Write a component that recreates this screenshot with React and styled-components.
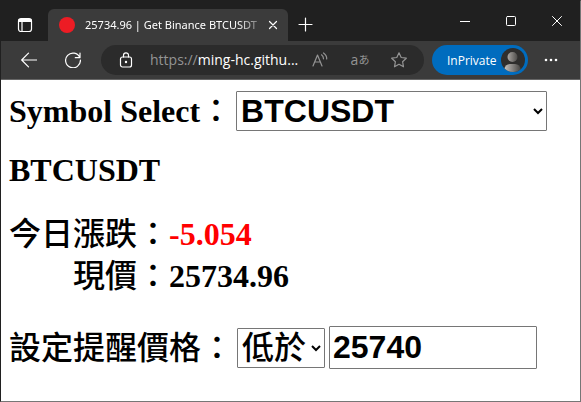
import React, { useState } from "react";
import styled, { createGlobalStyle } from "styled-components";

const GlobalStyle = createGlobalStyle`
  * { box-sizing: border-box; }
  body { margin: 0; background: #fff; }
  button { border: 0; padding: 0; background: none; color: inherit; font: inherit; }
  svg { display: block; flex: none; }
`;

const Window = styled.div`
  display: flex;
  flex-direction: column;
  min-height: 100vh;
  border: 1px solid #767676;
  border-left-color: #202020;
  border-top-color: #202020;
  font-family: "Open Sans", "Noto Sans", sans-serif;
`;

const TitleBar = styled.header`
  display: flex;
  height: 40px;
  background: #202020;
  color: #fff;
`;

const IconButton = styled.button`
  display: flex;
  align-items: center;
  justify-content: center;
  width: ${(p) => p.$width}px;
  height: ${(p) => p.$height || 40}px;
  flex: none;
  color: ${(p) => p.$color || "#fff"};
`;

const Tab = styled.div`
  display: flex;
  align-items: center;
  width: 240px;
  min-width: 0;
  margin-top: 8px;
  padding-left: 11px;
  border-radius: 6px 6px 0 0;
  background: #3b3b3b;
`;

const TabTitle = styled.span`
  flex: 1;
  margin-left: 10px;
  overflow: hidden;
  white-space: nowrap;
  font-family: "Noto Sans", sans-serif;
  font-size: 11px;
  line-height: 18px;
  mask-image: linear-gradient(to right, #000 88%, transparent 106%);
`;

const Controls = styled.div`
  display: flex;
  margin-left: auto;
`;

const Toolbar = styled.nav`
  display: flex;
  align-items: center;
  height: 39px;
  padding: 0 6px;
  background: #3b3b3b;
  border-bottom: 1px solid #666;
  color: #fff;
`;

const AddressBar = styled.div`
  display: flex;
  align-items: center;
  flex: 1;
  min-width: 0;
  height: 30px;
  margin-left: 6px;
  padding-right: 6px;
  border-radius: 15px;
  background: #2b2b2b;
`;

const Address = styled.span`
  flex: 1;
  overflow: hidden;
  white-space: nowrap;
  font-size: 14px;
  line-height: 20px;
  color: #fff;
`;

const Scheme = styled.span`
  color: #949494;
`;

const Glyphs = styled.span`
  font-family: "Open Sans", "Noto Sans CJK JP", sans-serif;
  font-size: ${(p) => p.$size}px;
  line-height: 18px;
`;

const Profile = styled.button`
  display: flex;
  align-items: center;
  justify-content: space-between;
  width: 96px;
  height: 30px;
  margin-left: 8px;
  flex: none;
  && { padding: 0 3px 0 15px; background: #006cbe; font-size: 12px; }
  border-radius: 15px;
`;

const Page = styled.main`
  padding: 10px 8px;
  font: bold 32px/42px "Liberation Serif", "Noto Sans CJK TC", serif;
  color: #000;
`;

const FieldRow = styled.div`
  display: flex;
  align-items: center;
  gap: 4px;
  margin-top: ${(p) => p.$top || 0}px;
`;

const Label = styled.label`
  white-space: nowrap;
`;

const Han = styled.span`
  font-family: "Noto Sans CJK TC", sans-serif;
  font-weight: 500;
  line-height: 32px;
`;

const Heading = styled.h1`
  margin: 17px 0 0;
  font: inherit;
`;

const Quotes = styled.dl`
  display: grid;
  grid-template-columns: max-content 1fr;
  margin: 22px 0 0;
`;

const Term = styled.dt`
  text-align: right;
`;

const Value = styled.dd`
  margin: 0;
  color: ${(p) => (p.$down ? "#f00" : "#000")};
`;

const Select = styled.select`
  width: ${(p) => p.$width}px;
  height: 40px;
  min-width: 0;
  padding: 0;
  border: 1px solid #767676;
  border-radius: 1px;
  background-color: #fff;
  color: #000;
  font: ${(p) => p.$weight || 700} 32px "Liberation Sans", "Noto Sans CJK TC", sans-serif;
`;

const PriceInput = styled.input`
  width: 208px;
  min-width: 0;
  height: 43px;
  padding: 1px 3px;
  border: 1px solid #767676;
  border-radius: 1px;
  color: #000;
  font: bold 32px "Liberation Sans", sans-serif;
`;

const Icon = ({ size = 16, children, ...rest }) => (
  <svg width={size} height={size} viewBox={`0 0 ${size} ${size}`} fill="none" stroke="currentColor" strokeWidth="1.2" strokeLinecap="round" strokeLinejoin="round" aria-hidden="true" {...rest}>
    {children}
  </svg>
);

const Avatar = () => (
  <svg width="24" height="24" viewBox="0 0 24 24" aria-hidden="true">
    <defs>
      <linearGradient id="skin"><stop offset="0" stopColor="#aaa6a2" /><stop offset="1" stopColor="#4d4b49" /></linearGradient>
      <linearGradient id="coat"><stop offset="0" stopColor="#c8c4c0" /><stop offset="1" stopColor="#454341" /></linearGradient>
      <clipPath id="disc"><circle cx="12" cy="12" r="12" /></clipPath>
    </defs>
    <g clipPath="url(#disc)">
      <rect width="24" height="24" fill="#2f2e2d" />
      <path d="M3 24v-2q1-6 6-6h5q5 0 6 6v2z" fill="url(#coat)" />
      <circle cx="11.5" cy="9" r="5" fill="url(#skin)" />
    </g>
  </svg>
);

export default function App() {
  const [symbol, setSymbol] = useState("BTCUSDT");
  const [side, setSide] = useState("低於");
  const [price, setPrice] = useState("25740");
  return (
    <Window>
      <GlobalStyle />
      <TitleBar>
        <IconButton $width={47} $height={47} aria-label="Tab actions">
          <Icon>
            <rect x="1.5" y="1.5" width="13" height="13" rx="2.5" />
            <path d="M2 2.5h12v2H2z" fill="currentColor" />
            <path d="M5 5v9" />
          </Icon>
        </IconButton>
        <Tab>
          <Icon stroke="none"><circle cx="8" cy="8" r="8" fill="#ed1c24" /></Icon>
          <TabTitle>25734.96 | Get Binance BTCUSDT</TabTitle>
          <IconButton $width={30} $height={32} aria-label="Close tab">
            <Icon size={10}><path d="M1.5 1.5l7 7M8.5 1.5l-7 7" /></Icon>
          </IconButton>
        </Tab>
        <IconButton $width={34} $height={46} aria-label="New tab">
          <Icon size={15}><path d="M7.5 1v13M1 7.5h13" /></Icon>
        </IconButton>
        <Controls>
          <IconButton $width={46} aria-label="Minimize"><Icon size={10}><path d="M0 5.5h10" strokeLinecap="butt" strokeWidth="1" /></Icon></IconButton>
          <IconButton $width={46} aria-label="Maximize"><Icon size={10}><rect x=".5" y=".5" width="9" height="9" rx="1" strokeWidth="1" /></Icon></IconButton>
          <IconButton $width={46} aria-label="Close"><Icon size={10}><path d="M.5.5l9 9M9.5.5l-9 9" strokeWidth="1" /></Icon></IconButton>
        </Controls>
      </TitleBar>
      <Toolbar>
        <IconButton $width={44} $height={36} aria-label="Back">
          <Icon><path d="M15.5 8H.7M7.5 1.2L.7 8l6.8 6.8" /></Icon>
        </IconButton>
        <IconButton $width={44} $height={36} aria-label="Refresh">
          <Icon><path d="M14.8 5.5A7.4 7.4 0 1 0 15.4 8M15 1v4.7h-4.7" /></Icon>
        </IconButton>
        <AddressBar>
          <IconButton $width={49} $height={30} aria-label="Site information">
            <Icon>
              <rect x="2.5" y="5" width="11" height="10" rx="2" />
              <path d="M5.5 5V3.3a2.5 2.5 0 0 1 5 0V5" />
              <circle cx="8" cy="10" r=".6" fill="currentColor" />
            </Icon>
          </IconButton>
          <Address><Scheme>https://</Scheme>ming-hc.githu...</Address>
          <IconButton $width={40} $height={30} $color="#949494" aria-label="Read aloud">
            <Icon><path d="M1 14L5.5 3 10 14M2.6 10h5.8M9.5 2.8q2 1.5 2 4M11.5 1q3.5 2.5 3.2 6" /></Icon>
          </IconButton>
          <IconButton $width={40} $height={30} $color="#949494" aria-label="Translate">
            <Glyphs $size={14}>a</Glyphs><Glyphs $size={11}>あ</Glyphs>
          </IconButton>
          <IconButton $width={38} $height={30} $color="#949494" aria-label="Add to favorites">
            <Icon><path d="M8 .8l2.2 4.7 5.1.7-3.7 3.5.9 5.1L8 12.3l-4.5 2.5.9-5.1L.7 6.2l5.1-.7z" /></Icon>
          </IconButton>
        </AddressBar>
        <Profile>InPrivate<Avatar /></Profile>
        <IconButton $width={46} $height={36} aria-label="Settings and more">
          <Icon stroke="none" fill="currentColor"><circle cx="3" cy="8" r="1.3" /><circle cx="8" cy="8" r="1.3" /><circle cx="13" cy="8" r="1.3" /></Icon>
        </IconButton>
      </Toolbar>
      <Page>
        <FieldRow>
          <Label htmlFor="symbol">Symbol Select<Han>：</Han></Label>
          <Select id="symbol" $width={311} value={symbol} onChange={(e) => setSymbol(e.target.value)}>
            <option>BTCUSDT</option>
          </Select>
        </FieldRow>
        <Heading>{symbol}</Heading>
        <Quotes>
          <Term><Han>今日漲跌：</Han></Term>
          <Value $down>-5.054</Value>
          <Term><Han>現價：</Han></Term>
          <Value>25734.96</Value>
        </Quotes>
        <FieldRow $top={29}>
          <Label htmlFor="side"><Han>設定提醒價格：</Han></Label>
          <Select id="side" $width={88} $weight={500} value={side} onChange={(e) => setSide(e.target.value)}>
            <option>低於</option>
          </Select>
          <PriceInput aria-label="設定提醒價格" value={price} onChange={(e) => setPrice(e.target.value)} />
        </FieldRow>
      </Page>
    </Window>
  );
}
